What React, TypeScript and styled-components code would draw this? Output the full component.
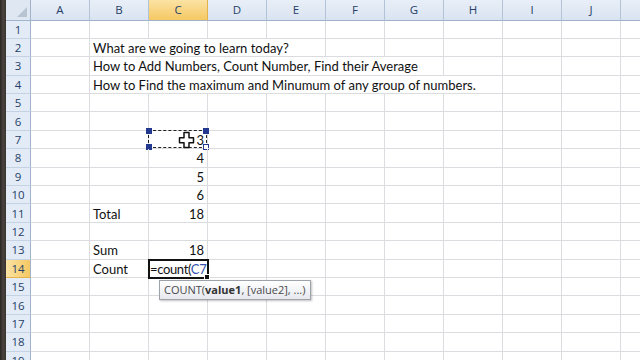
import React from 'react';
import styled, { createGlobalStyle, css } from 'styled-components';

const GlobalStyle = createGlobalStyle`
  html, body {
    margin: 0;
    padding: 0;
    width: 640px;
    height: 360px;
    overflow: hidden;
    background: #ffffff;
  }

  #root {
    width: 640px;
    height: 360px;
  }
`;

// the last column (K) is only partly on screen, its label falls outside the window
const COLUMNS = ['A', 'B', 'C', 'D', 'E', 'F', 'G', 'H', 'I', 'J', ''];
const ROW_COUNT = 19;
const ACTIVE_COL = 'C';
const ACTIVE_ROW = 14;

interface CellData {
  col: number;
  span?: number;
  text?: React.ReactNode;
  align?: 'left' | 'right';
  marquee?: boolean;
  editing?: boolean;
}

const SHEET: Record<number, CellData[]> = {
  2: [{ col: 1, span: 4, text: 'What are we going to learn today?' }],
  3: [{ col: 1, span: 6, text: 'How to Add Numbers, Count Number, Find their Average' }],
  4: [{ col: 1, span: 7, text: 'How to Find the maximum and Minumum of any group of numbers.' }],
  7: [{ col: 2, text: '3', align: 'right', marquee: true }],
  8: [{ col: 2, text: '4', align: 'right' }],
  9: [{ col: 2, text: '5', align: 'right' }],
  10: [{ col: 2, text: '6', align: 'right' }],
  11: [
    { col: 1, text: 'Total' },
    { col: 2, text: '18', align: 'right' },
  ],
  13: [
    { col: 1, text: 'Sum' },
    { col: 2, text: '18', align: 'right' },
  ],
  14: [
    { col: 1, text: 'Count' },
    { col: 2, editing: true },
  ],
};

const buildRow = (row: number) => {
  const cells: CellData[] = [];
  const filled = SHEET[row] || [];
  let col = 0;
  while (col < COLUMNS.length) {
    const hit = filled.find((c) => c.col === col);
    if (hit) {
      cells.push(hit);
      col += hit.span || 1;
    } else {
      cells.push({ col });
      col += 1;
    }
  }
  return cells;
};

const Cursor = () => (
  <CursorIcon width="17" height="18" viewBox="0 0 17 18">
    <path
      d="M6 1.5h5v5.2h4.5v5h-4.5v4.8h-5v-4.8h-4.5v-5h4.5z"
      fill="#ffffff"
      stroke="#111111"
      strokeWidth="1.5"
      strokeLinejoin="round"
    />
  </CursorIcon>
);

const App = () => {
  const rows = Array.from({ length: ROW_COUNT }, (_, i) => i + 1);
  return (
    <>
      <GlobalStyle />
      <Window>
        <FrameEdge />
        <Sheet>
          <Corner>
            <CornerMark />
          </Corner>
          {COLUMNS.map((c, i) => (
            <ColumnHeader key={i} $active={c === ACTIVE_COL}>
              {c}
            </ColumnHeader>
          ))}
          {rows.map((r) => (
            <React.Fragment key={r}>
              <RowHeader $active={r === ACTIVE_ROW}>{r}</RowHeader>
              {buildRow(r).map((cell) => (
                <Cell
                  key={cell.col}
                  $span={cell.span || 1}
                  $align={cell.align || 'left'}
                  $editing={!!cell.editing}
                >
                  {cell.editing ? (
                    <>
                      <EditText>
                        =count(<RefText>C7</RefText>
                      </EditText>
                      <FillHandle />
                      <Tooltip>
                        COUNT(<b>value1</b>, [value2], ...)
                      </Tooltip>
                    </>
                  ) : (
                    cell.text
                  )}
                  {cell.marquee && (
                    <>
                      <Marquee>
                        <Handle $pos="tl" />
                        <Handle $pos="tr" />
                        <Handle $pos="bl" />
                        <Handle $pos="br" $hollow />
                      </Marquee>
                      <Cursor />
                    </>
                  )}
                </Cell>
              ))}
            </React.Fragment>
          ))}
        </Sheet>
      </Window>
    </>
  );
};

export default App;

const Window = styled.div`
  display: flex;
  width: 640px;
  height: 360px;
  overflow: hidden;
  background: #ffffff;
`;

const FrameEdge = styled.div`
  flex: 0 0 6px;
  background: linear-gradient(to right, #2a2522 0, #4a4340 3px, #3a3431 6px);
`;

const Sheet = styled.div`
  flex: 0 0 auto;
  display: grid;
  grid-template-columns: 25px repeat(11, 59px);
  grid-template-rows: 20.5px;
  grid-auto-rows: 18.4px;
  font-family: Lato, 'Open Sans', sans-serif;
  font-size: 13px;
  color: #111111;
`;

const headerBase = css`
  display: flex;
  align-items: center;
  justify-content: center;
  box-sizing: border-box;
  font-family: 'Open Sans', 'Noto Sans', sans-serif;
  font-size: 11.5px;
  color: #263f68;
`;

const Corner = styled.div`
  ${headerBase};
  position: relative;
  background: #dfe7f2;
  border-right: 1px solid #9fb4cc;
  border-bottom: 1px solid #9fb4cc;
`;

const CornerMark = styled.div`
  position: absolute;
  right: 3px;
  bottom: 3px;
  width: 0;
  height: 0;
  border-left: 10px solid transparent;
  border-bottom: 10px solid #b9c4d2;
`;

const ColumnHeader = styled.div<{ $active: boolean }>`
  ${headerBase};
  background: ${({ $active }) =>
    $active
      ? 'linear-gradient(to bottom, #fbe3a4, #f5c862)'
      : 'linear-gradient(to bottom, #e9eff8, #d9e3f0)'};
  border-right: 1px solid ${({ $active }) => ($active ? '#e3b24c' : '#b2c3d8')};
  border-bottom: 1px solid #9fb4cc;
`;

const RowHeader = styled.div<{ $active: boolean }>`
  ${headerBase};
  background: ${({ $active }) =>
    $active ? 'linear-gradient(to right, #fbe3a4, #f5c862)' : '#e3ebf6'};
  border-right: 1px solid #9fb4cc;
  border-bottom: 1px solid ${({ $active }) => ($active ? '#e3b24c' : '#c5d2e3')};
`;

const Cell = styled.div<{ $span: number; $align: 'left' | 'right'; $editing: boolean }>`
  position: relative;
  grid-column: span ${({ $span }) => $span};
  display: flex;
  align-items: center;
  justify-content: ${({ $align }) => ($align === 'right' ? 'flex-end' : 'flex-start')};
  box-sizing: border-box;
  padding: ${({ $align }) => ($align === 'right' ? '1px 3px 0 0' : '1px 0 0 3px')};
  border-right: 1px solid #dadcdf;
  border-bottom: 1px solid #dadcdf;
  white-space: nowrap;

  ${({ $editing }) =>
    $editing &&
    css`
      z-index: 2;
      padding: 1px 0 0 1px;
      outline: 2px solid #111111;
      outline-offset: -1px;
    `}
`;

const EditText = styled.span`
  color: #111111;
  letter-spacing: -0.35px;
`;

const RefText = styled.span`
  color: #3552b0;
`;

const FillHandle = styled.div`
  position: absolute;
  right: -3px;
  bottom: -3px;
  width: 4px;
  height: 4px;
  background: #111111;
  border: 1px solid #ffffff;
`;

const Tooltip = styled.div`
  position: absolute;
  left: 10px;
  top: calc(100% + 3px);
  padding: 1px 4px 2px 4px;
  font-family: 'Open Sans', 'Noto Sans', sans-serif;
  font-size: 11px;
  color: #4b4b4b;
  background: linear-gradient(to bottom, #ffffff, #e6e8ee);
  border: 1px solid #9ea3ab;
  box-shadow: 1px 1px 2px rgba(0, 0, 0, 0.25);
  white-space: nowrap;

  b {
    color: #333333;
    font-weight: 700;
  }
`;

const Marquee = styled.div`
  position: absolute;
  left: -1px;
  top: -1px;
  right: 0;
  bottom: 0;
  border: 1px dashed #222222;
`;

const handlePos = {
  tl: css`left: -3px; top: -3px;`,
  tr: css`right: -3px; top: -3px;`,
  bl: css`left: -3px; bottom: -3px;`,
  br: css`right: -3px; bottom: -3px;`,
};

const Handle = styled.div<{ $pos: keyof typeof handlePos; $hollow?: boolean }>`
  position: absolute;
  width: 4px;
  height: 4px;
  background: ${({ $hollow }) => ($hollow ? '#ffffff' : '#23388f')};
  border: 1px solid #23388f;
  ${({ $pos }) => handlePos[$pos]};
`;

const CursorIcon = styled.svg`
  position: absolute;
  left: 29px;
  top: 0;
  z-index: 3;
`;
